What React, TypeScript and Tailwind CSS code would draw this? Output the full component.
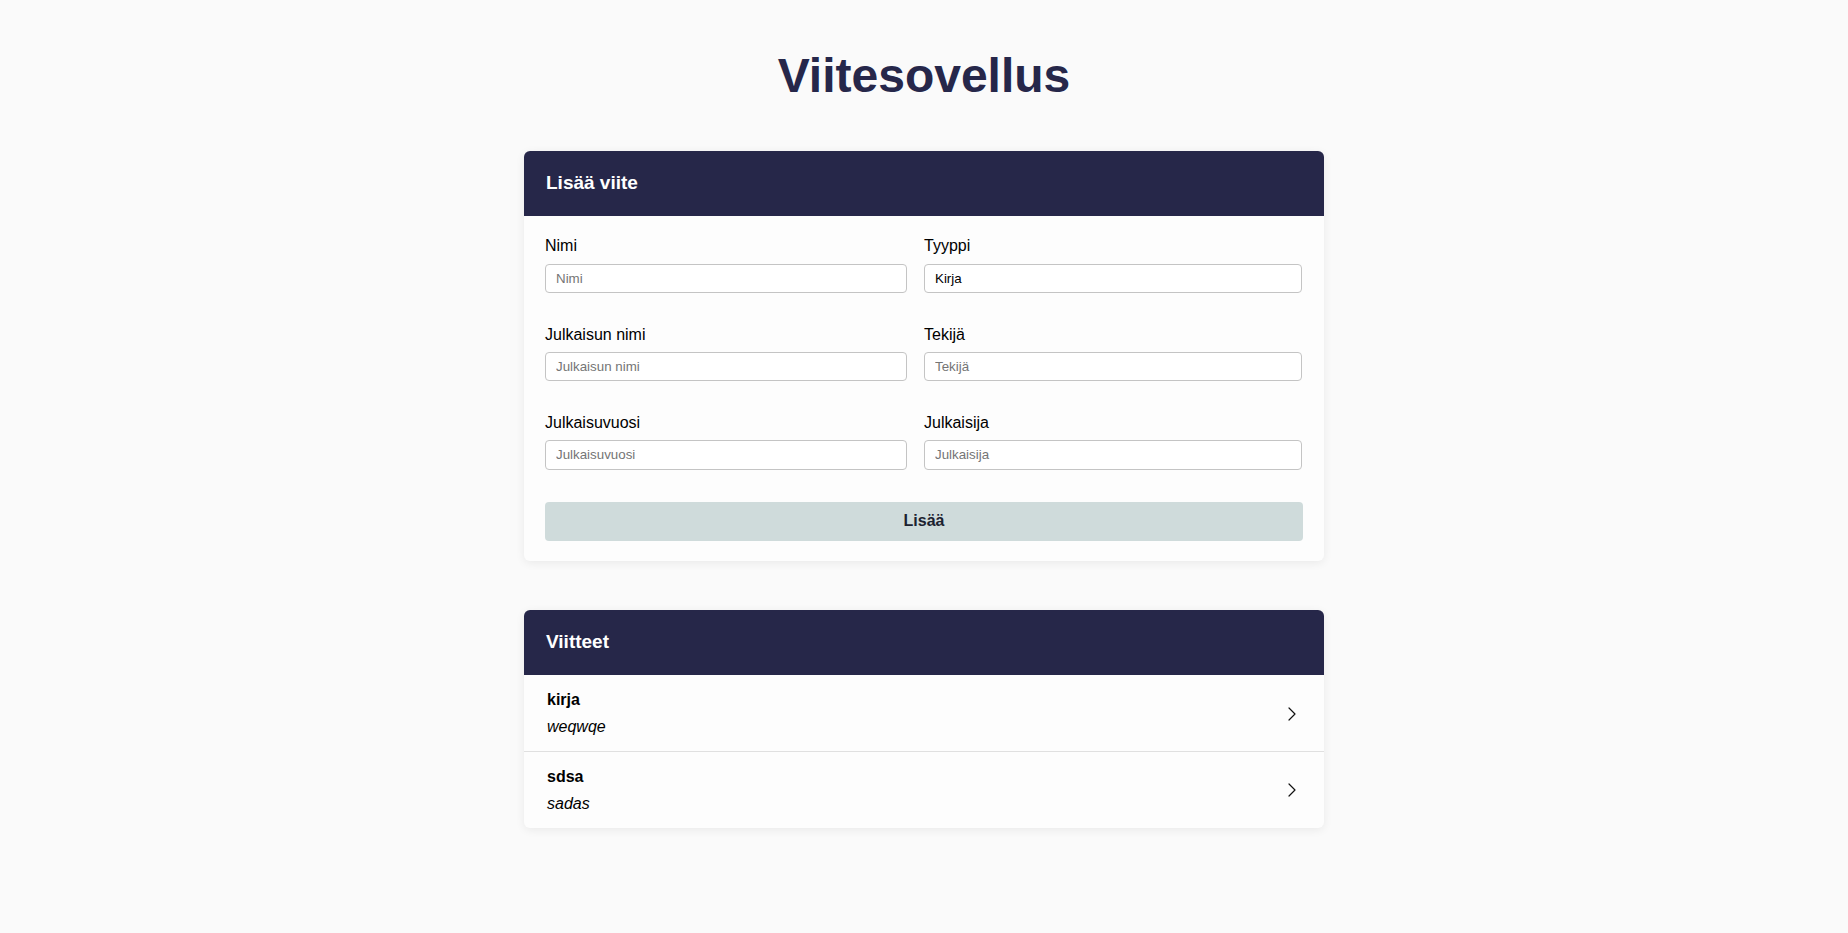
import React from "react";
import { ChevronRight } from "lucide-react";

const font = { fontFamily: '"Liberation Sans", Arial, sans-serif' };

function Field({ label, placeholder, value }: { label: string; placeholder: string; value?: string }) {
  return (
    <div className="mb-[32.6px] flex flex-col">
      <label className="mb-2 block text-[16px] leading-[18.4px] text-black">{label}</label>
      <input
        readOnly
        defaultValue={value}
        placeholder={placeholder}
        className="block h-[29.33px] w-full rounded-[4px] border border-[#c4c4c4] bg-white px-[10px] text-[13.33px] text-black outline-none placeholder:text-[#757575]"
      />
    </div>
  );
}

function Item({ title, sub, last }: { title: string; sub: string; last?: boolean }) {
  return (
    <div className={`flex items-center justify-between pl-[23px] pr-[20px] pt-[16px] pb-[14.5px] ${last ? "" : "border-b border-[#e0e0e0]"}`}>
      <div className="flex flex-col">
        <div className="text-[16px] font-bold leading-[18.4px] text-black">{title}</div>
        <div className="mt-[8.5px] text-[16px] italic leading-[18.4px] text-black">{sub}</div>
      </div>
      <ChevronRight size={24} strokeWidth={1.2} color="#111" />
    </div>
  );
}

export default function App() {
  return (
    <div className="min-h-[933px] w-full bg-[#fafafa] pt-[48px] pb-[60px]" style={font}>
      <h1 className="mb-[48px] text-center text-[48px] font-bold leading-[55.2px] text-[#26274a]">Viitesovellus</h1>
      <div className="mx-auto flex w-[800px] flex-col gap-[49px]">
        <div className="overflow-hidden rounded-[6px] bg-[#fdfdfd] shadow-[0_2px_10px_rgba(0,0,0,0.07)]">
          <div className="h-[65px] bg-[#262749] px-[22px] pt-[21px]">
            <h2 className="text-[19px] font-bold leading-[22px] text-white">Lisää viite</h2>
          </div>
          <div className="px-[21px] pt-[21px] pb-[20px]">
            <div className="grid grid-cols-[362px_378px] gap-x-[17px]">
              <Field label="Nimi" placeholder="Nimi" />
              <Field label="Tyyppi" placeholder="Tyyppi" value="Kirja" />
              <Field label="Julkaisun nimi" placeholder="Julkaisun nimi" />
              <Field label="Tekijä" placeholder="Tekijä" />
              <Field label="Julkaisuvuosi" placeholder="Julkaisuvuosi" />
              <Field label="Julkaisija" placeholder="Julkaisija" />
            </div>
            <button className="block h-[38.7px] w-full rounded-[4px] bg-[#cfdbdb] text-[16px] font-bold leading-[18.4px] text-[#1c2230]">
              Lisää
            </button>
          </div>
        </div>
        <div className="overflow-hidden rounded-[6px] bg-[#fdfdfd] shadow-[0_2px_10px_rgba(0,0,0,0.07)]">
          <div className="h-[65px] bg-[#262749] px-[22px] pt-[21px]">
            <h2 className="text-[19px] font-bold leading-[22px] text-white">Viitteet</h2>
          </div>
          <Item title="kirja" sub="weqwqe" />
          <Item title="sdsa" sub="sadas" last />
        </div>
      </div>
    </div>
  );
}
